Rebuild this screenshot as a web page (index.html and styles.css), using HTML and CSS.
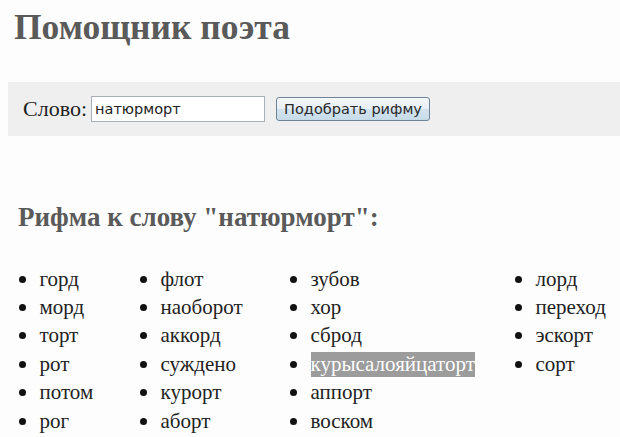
FILE: index.html
```html
<!DOCTYPE html>
<html lang="ru">
<head>
<meta charset="utf-8">
<title>Помощник поэта</title>
<link rel="stylesheet" href="styles.css">
</head>
<body>
<h1 class="title">Помощник поэта</h1>
<form class="bar">
  <label class="label" for="word">Слово:</label>
  <input class="field" id="word" type="text" value="натюрморт">
  <button class="btn" type="button">Подобрать рифму</button>
</form>
<h2 class="subtitle">Рифма к слову "натюрморт":</h2>
<div class="cols">
  <ul class="col c1">
    <li>горд</li><li>морд</li><li>торт</li><li>рот</li><li>потом</li><li>рог</li>
  </ul>
  <ul class="col c2">
    <li>флот</li><li>наоборот</li><li>аккорд</li><li>суждено</li><li>курорт</li><li>аборт</li>
  </ul>
  <ul class="col c3">
    <li>зубов</li><li>хор</li><li>сброд</li><li><span class="sel">курысалояйцаторт</span></li><li>аппорт</li><li>воском</li>
  </ul>
  <ul class="col c4">
    <li>лорд</li><li>переход</li><li>эскорт</li><li>сорт</li>
  </ul>
</div>
</body>
</html>
```
FILE: styles.css
```css
html, body {
  margin: 0;
  padding: 0;
  background: #fdfdfd;
}
body {
  font-family: "Liberation Serif", "Times New Roman", serif;
  color: #1e1e1e;
  width: 620px;
  height: 437px;
  overflow: hidden;
}
.title {
  margin: 0;
  padding: 5px 0 0 14px;
  box-sizing: border-box;
  height: 49px;
  line-height: 44px;
  font-size: 35.5px;
  font-weight: bold;
  color: #5a5a5a;
}
.bar {
  margin: 33px 0 0 8px;
  height: 54px;
  background: #efefef;
  display: flex;
  align-items: center;
  padding-left: 15px;
}
.label {
  font-size: 22px;
  color: #222;
  margin-right: 4px;
}
.field {
  width: 174px;
  height: 26px;
  box-sizing: border-box;
  border: 1px solid #a9b0b8;
  background: #fff;
  font-family: "DejaVu Sans", Verdana, sans-serif;
  font-size: 14.5px;
  color: #222;
  padding: 0 0 0 3px;
  margin: 0 11px 0 0;
}
.btn {
  width: 154px;
  height: 24px;
  box-sizing: border-box;
  border: 1px solid #6f8597;
  border-radius: 3px;
  background: linear-gradient(#f4f8fb 0%, #e6eef5 50%, #d3e3ee 51%, #c6dbe9 100%);
  font-family: "DejaVu Sans", Verdana, sans-serif;
  font-size: 14.5px;
  color: #2a2a2a;
  padding: 0;
}
.subtitle {
  margin: 61px 0 0 18px;
  height: 40px;
  line-height: 40px;
  font-size: 27px;
  font-weight: bold;
  color: #5a5a5a;
}
.cols {
  display: grid;
  grid-template-columns: 121px 150px 225px 1fr;
  margin: 28px 0 0 18.5px;
}
.col {
  list-style: none;
  margin: 0;
  padding: 0;
}
.col li {
  display: flex;
  align-items: center;
  height: 28.4px;
  font-size: 21px;
  color: #222;
}
.col li::before {
  content: "";
  width: 7px;
  height: 7px;
  border-radius: 50%;
  background: #111;
  margin-right: 14px;
  flex: none;
}
.sel {
  background: #9c9c9c;
  color: #fff;
  line-height: 25px;
}
```
